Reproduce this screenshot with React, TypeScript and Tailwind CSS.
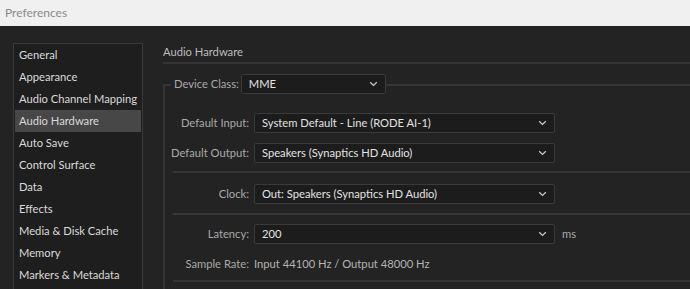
import React from "react";

const font = { fontFamily: "Lato, 'Open Sans', sans-serif" };

function Chevron() {
  return (
    <svg width="9" height="6" viewBox="0 0 9 6" className="shrink-0">
      <path d="M1.2 1.2 L4.5 4.4 L7.8 1.2" fill="none" stroke="#c8c8c8" strokeWidth="1.3" />
    </svg>
  );
}

function Dropdown({ value, w }: { value: string; w: string }) {
  return (
    <div
      className={`${w} h-[20px] flex items-center justify-between pl-[7px] pr-[7px] bg-[#1c1c1c] border border-[#3a3a3a] rounded-[2px] text-[#e2e2e2] text-[11.2px]`}
    >
      <span className="leading-none">{value}</span>
      <Chevron />
    </div>
  );
}

function Row({ label, value, extra }: { label: string; value: string; extra?: React.ReactNode }) {
  return (
    <div className="flex items-center h-[20px]">
      <div className="w-[84px] text-right text-[#a9a9a9] text-[11.2px] leading-none">{label}</div>
      <div className="ml-[5px]">
        <Dropdown value={value} w="w-[301px]" />
      </div>
      {extra}
    </div>
  );
}

function Sep() {
  return <div className="ml-[8px] h-[2px] bg-[#353535]" />;
}

export default function App() {
  const items = [
    "General",
    "Appearance",
    "Audio Channel Mapping",
    "Audio Hardware",
    "Auto Save",
    "Control Surface",
    "Data",
    "Effects",
    "Media & Disk Cache",
    "Memory",
    "Markers & Metadata",
  ];
  return (
    <div className="w-[690px] h-[289px] overflow-hidden bg-[#232323] flex flex-col" style={font}>
      <div className="h-[26px] shrink-0 bg-[#f0f0f0] flex items-center pl-[5px] text-[12px] text-[#8a8a8a]">
        Preferences
      </div>
      <div className="flex flex-1 min-h-0">
        <div className="ml-[13px] mt-[17px] w-[130px] shrink-0 bg-[#1e1e1e] border border-[#393939] border-b-0 px-px">
          {items.map((it) => (
            <div
              key={it}
              className={`h-[22px] flex items-center pl-[4px] text-[11.2px] text-[#dadada] whitespace-nowrap ${
                it === "Audio Hardware" ? "bg-[#474747]" : ""
              }`}
            >
              {it}
            </div>
          ))}
        </div>
        <div className="ml-[20px] flex-1 flex flex-col min-w-0">
          <div className="mt-[18px] h-[16px] flex items-center text-[11.2px] text-[#bdbdbd]">Audio Hardware</div>
          <div className="mt-[2px] h-[2px] bg-[#353535]" />
          <div className="mt-[10px] flex items-stretch h-[20px]">
            <div className="w-[8px] flex flex-col">
              <div className="h-[10px]" />
              <div className="flex-1 border-l-2 border-t-2 border-[#353535]" />
            </div>
            <div className="flex items-center pl-[3px] text-[11.2px] text-[#a9a9a9]">Device Class:</div>
            <div className="ml-[2px] flex items-center">
              <Dropdown value="MME" w="w-[145px]" />
            </div>
            <div className="flex-1 flex flex-col">
              <div className="h-[10px]" />
              <div className="h-[2px] bg-[#353535]" />
            </div>
          </div>
          <div className="flex-1 border-l-2 border-[#353535] flex flex-col">
            <div className="mt-[19px]">
              <Row label="Default Input:" value="System Default - Line (RODE AI-1)" />
            </div>
            <div className="mt-[10px]">
              <Row label="Default Output:" value="Speakers (Synaptics HD Audio)" />
            </div>
            <div className="mt-[8px]">
              <Sep />
            </div>
            <div className="mt-[11px]">
              <Row label="Clock:" value="Out: Speakers (Synaptics HD Audio)" />
            </div>
            <div className="mt-[9px]">
              <Sep />
            </div>
            <div className="mt-[9px]">
              <Row
                label="Latency:"
                value="200"
                extra={<span className="ml-[7px] text-[11.2px] text-[#a9a9a9]">ms</span>}
              />
            </div>
            <div className="mt-[12px] flex items-center h-[16px] text-[11.2px]">
              <div className="w-[84px] text-right text-[#a9a9a9]">Sample Rate:</div>
              <div className="ml-[5px] text-[#b4b4b4]">Input 44100 Hz / Output 48000 Hz</div>
            </div>
            <div className="mt-[8px]">
              <Sep />
            </div>
          </div>
        </div>
      </div>
    </div>
  );
}
